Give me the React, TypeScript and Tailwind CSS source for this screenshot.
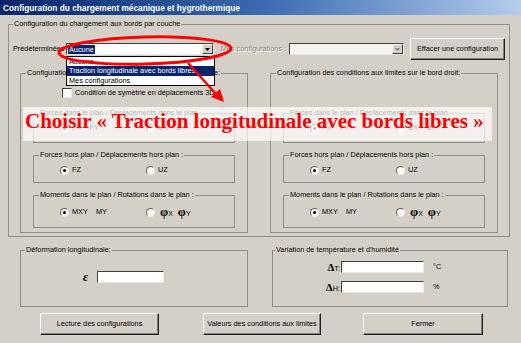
import React from "react";

const F = "font-['Liberation_Sans',Arial,sans-serif]";

function Radio({ checked }: { checked?: boolean }) {
  return (
    <span className="w-[9px] h-[9px] rounded-full bg-white border border-t-[#606060] border-l-[#606060] border-b-[#e8e8e8] border-r-[#e8e8e8] flex items-center justify-center shrink-0">
      {checked && <span className="w-[3px] h-[3px] rounded-full bg-black" />}
    </span>
  );
}

function RadioItem({ checked, children, w }: { checked?: boolean; children: React.ReactNode; w?: string }) {
  return (
    <div className={`flex items-center h-[12px] ${w ?? ""}`}>
      <Radio checked={checked} />
      <span className="ml-[3px] flex items-center whitespace-nowrap">{children}</span>
    </div>
  );
}

function Phi({ sub }: { sub: string }) {
  return (
    <span className="flex items-end">
      <span className="font-['Liberation_Serif',serif] font-bold text-[13px] leading-[12px]">φ</span>
      <span className="text-[7px] leading-[8px]">{sub}</span>
    </span>
  );
}

function SubGroup({ title, pt, pb, children }: { title: string; pt: string; pb: string; children: React.ReactNode }) {
  return (
    <fieldset className={`min-w-0 mx-[12px] border border-[#918e89] ${pb}`}>
      <legend className="ml-[5px] px-[1px] leading-[10px] whitespace-nowrap">{title}</legend>
      <div className={`flex pl-[26px] ${pt}`}>{children}</div>
    </fieldset>
  );
}

function Sunken({ w, h = "h-[12px]", children }: { w: string; h?: string; children?: React.ReactNode }) {
  return (
    <div className={`${w} ${h} bg-white border border-t-[#404040] border-l-[#404040] border-b-[#e8e8e8] border-r-[#e8e8e8] flex items-center`}>
      {children}
    </div>
  );
}

function Button({ w, children }: { w: string; children: React.ReactNode }) {
  return (
    <div className={`${w} h-[22px] flex items-center justify-center bg-[#d4d0c8] border border-t-white border-l-white border-b-[#202020] border-r-[#202020] shadow-[inset_-1px_-1px_0_#808080] whitespace-nowrap`}>
      {children}
    </div>
  );
}

function Arrow({ grey }: { grey?: boolean }) {
  return (
    <div className="w-[11px] h-full bg-[#d4d0c8] border border-t-white border-l-white border-b-[#404040] border-r-[#404040] flex items-center justify-center">
      <svg width="5" height="3" viewBox="0 0 5 3">
        <polygon points="0,0 5,0 2.5,3" fill={grey ? "#808080" : "#000"} />
      </svg>
    </div>
  );
}

function SideGroup({ title, checkbox }: { title: string; checkbox?: boolean }) {
  return (
    <fieldset className="min-w-0 w-[228px] border border-[#918e89] pb-[4px]">
      <legend className="ml-[5px] px-[1px] leading-[10px] whitespace-nowrap">{title}</legend>
      <div className="mt-[10px] h-[10px] pl-[41px] flex items-center">
        {checkbox && (
          <>
            <span className="w-[10px] h-[10px] bg-white border border-t-[#404040] border-l-[#404040] border-b-[#e8e8e8] border-r-[#e8e8e8]" />
            <span className="ml-[3px] whitespace-nowrap">Condition de symétrie en déplacements 3D</span>
          </>
        )}
      </div>
      <div className="mt-[10px]">
        <SubGroup title="Forces dans le plan / Déplacements dans le plan" pt="pt-[4px]" pb="pb-[8px]">
          <RadioItem checked w="w-[86px]">FX&nbsp;&nbsp;&nbsp;&nbsp;FY</RadioItem>
          <RadioItem>UX&nbsp;&nbsp;&nbsp;&nbsp;UY</RadioItem>
        </SubGroup>
      </div>
      <div className="mt-[7px]">
        <SubGroup title="Forces hors plan / Déplacements hors plan :" pt="pt-[4px]" pb="pb-[6px]">
          <RadioItem checked w="w-[86px]">FZ</RadioItem>
          <RadioItem>UZ</RadioItem>
        </SubGroup>
      </div>
      <div className="mt-[7px]">
        <SubGroup title="Moments dans le plan / Rotations dans le plan :" pt="pt-[6px]" pb="pb-[9px]">
          <RadioItem checked w="w-[86px]">MXY&nbsp;&nbsp;&nbsp;&nbsp;MY</RadioItem>
          <RadioItem>
            <span className="flex items-end gap-[5px] ml-[2px]">
              <Phi sub="X" />
              <Phi sub="Y" />
            </span>
          </RadioItem>
        </SubGroup>
      </div>
    </fieldset>
  );
}

export default function App() {
  return (
    <div className={`w-[521px] h-[343px] bg-[#d4d0c8] relative overflow-hidden text-black text-[7.3px] leading-[10px] ${F}`}>
      <div className="h-[15px] pl-[3px] flex items-center bg-linear-to-r from-[#0a246a] via-[#3a6ab0] to-[#b4cdec] text-white font-bold text-[8.3px] whitespace-nowrap">
        Configuration du chargement mécanique et hygrothermique
      </div>

      <div className="pl-[8px] pt-[4px]">
        <fieldset className="min-w-0 w-[502px] border border-[#918e89] pb-[3px]">
          <legend className="ml-[4px] px-[1px] leading-[10px] whitespace-nowrap">
            Configuration du chargement aux bords par couche
          </legend>

          <div className="mt-[9px] h-[22px] flex items-center pl-[4px]">
            <span className="w-[53px] whitespace-nowrap overflow-visible">Prédéterminées :</span>
            <div className="w-[148px] h-[12px] flex bg-white border border-t-[#404040] border-l-[#404040] border-b-[#e8e8e8] border-r-[#e8e8e8]">
              <div className="flex-1 flex items-center pl-[1px]">
                <span className="bg-[#0a246a] text-white px-[1px] leading-[9px]">Aucune</span>
              </div>
              <Arrow />
            </div>
            <span className="ml-[6px] w-[66px] text-right whitespace-nowrap text-[#8a8782] [text-shadow:1px_1px_0_#fff]">
              Mes configurations :
            </span>
            <div className="ml-[3px] w-[115px] h-[12px] flex bg-[#f4f3f1] border border-t-[#404040] border-l-[#404040] border-b-[#e8e8e8] border-r-[#e8e8e8]">
              <div className="flex-1" />
              <Arrow grey />
            </div>
            <div className="ml-[6px]">
              <Button w="w-[95px]">Effacer une configuration</Button>
            </div>
          </div>

          <div className="mt-[8px] flex pl-[11px] gap-[22px]">
            <SideGroup title="Configuration des conditions aux limites sur le bord gauche:" checkbox />
            <SideGroup title="Configuration des conditions aux limites sur le bord droit:" />
          </div>
        </fieldset>
      </div>

      <div className="mt-[8px] pl-[20px] flex">
        <fieldset className="min-w-0 w-[228px] border border-[#918e89] pb-[23px]">
          <legend className="ml-[4px] px-[1px] leading-[10px] whitespace-nowrap">Déformation longitudinale:</legend>
          <div className="pt-[16px] pl-[62px] flex items-center">
            <span className="w-[14px] font-['Liberation_Serif',serif] italic font-bold text-[12px] leading-[12px]">ε</span>
            <Sunken w="w-[67px]" />
          </div>
        </fieldset>
        <fieldset className="min-w-0 ml-[24px] w-[236px] border border-[#918e89] pb-[13px]">
          <legend className="ml-[2px] px-[1px] leading-[10px] whitespace-nowrap">Variation de température et d'humidité</legend>
          <div className="pt-[6px] pl-[48px] flex items-center">
            <span className="w-[19px] flex items-end justify-end">
              <span className="font-['Liberation_Serif',serif] font-bold text-[11px] leading-[11px]">Δ</span>
              <span className="leading-[9px]">T:</span>
            </span>
            <div className="ml-[1px]">
              <Sunken w="w-[83px]" />
            </div>
            <span className="ml-[9px]">°C</span>
          </div>
          <div className="mt-[8px] pl-[48px] flex items-center">
            <span className="w-[19px] flex items-end justify-end">
              <span className="font-['Liberation_Serif',serif] font-bold text-[11px] leading-[11px]">Δ</span>
              <span className="leading-[9px]">H:</span>
            </span>
            <div className="ml-[1px]">
              <Sunken w="w-[83px]" />
            </div>
            <span className="ml-[9px]">%</span>
          </div>
        </fieldset>
      </div>

      <div className="mt-[6px] pl-[40px] flex">
        <Button w="w-[119px]">Lecture des configurations</Button>
        <div className="ml-[44px]">
          <Button w="w-[118px]">Valeurs des conditions aux limites</Button>
        </div>
        <div className="ml-[42px]">
          <Button w="w-[120px]">Fermer</Button>
        </div>
      </div>

      {/* open dropdown list */}
      <div className="absolute left-[66px] top-[56px] w-[149px] border border-black bg-white">
        <div className="h-[9px] pl-[2px] leading-[9px]">Aucune</div>
        <div className="h-[10px] pl-[2px] leading-[10px] bg-[#0a246a] text-white whitespace-nowrap">
          Traction longitudinale avec bords libres
        </div>
        <div className="h-[9px] pl-[2px] leading-[9px]">Mes configurations</div>
      </div>

      {/* annotation */}
      <div className="absolute left-[23px] top-[107px] w-[469px] h-[34px] bg-white/70 pt-[4px] pl-[2px]">
        <div className="font-['Liberation_Serif',serif] font-bold text-[21px] leading-[21px] text-[#ff0000] whitespace-nowrap">
          Choisir « Traction longitudinale avec bords libres »
        </div>
      </div>

      <svg className="absolute left-0 top-0 pointer-events-none" width="521" height="343" viewBox="0 0 521 343">
        <ellipse cx="145" cy="50.5" rx="86" ry="13.5" fill="none" stroke="#ff0000" strokeWidth="3" transform="rotate(-1.5 145 50.5)" />
        <line x1="188" y1="63" x2="216" y2="94" stroke="#ff0000" strokeWidth="2.5" />
        <polygon points="224,102 211,97 220,89" fill="#ff0000" />
      </svg>
    </div>
  );
}
